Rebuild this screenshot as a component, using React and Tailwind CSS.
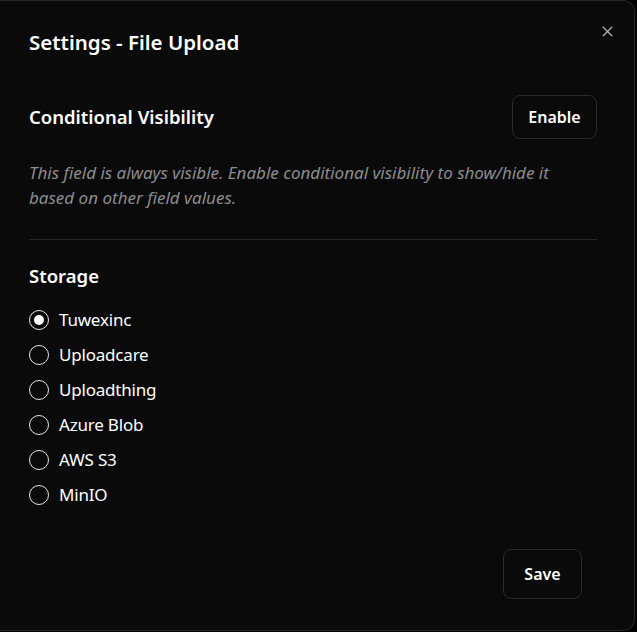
import { useState } from "react";

const options = ["Tuwexinc", "Uploadcare", "Uploadthing", "Azure Blob", "AWS S3", "MinIO"];

const App = () => {
  const [storage, setStorage] = useState("Tuwexinc");

  return (
    <div className="w-[637px] h-[632px] bg-black" style={{ fontFamily: '"Noto Sans", "Open Sans", sans-serif' }}>
      <div className="relative w-[635px] h-[631px] bg-[#0a0a0a] border-y border-r border-[#262626] rounded-r-xl pl-[29px] pr-[37px] pt-[26px] text-white">
        <button className="absolute right-[18px] top-[22px] text-[#b5b5b5]">
          <svg width="17" height="17" viewBox="0 0 24 24" fill="none" stroke="currentColor" strokeWidth="1.8" strokeLinecap="round">
            <path d="M18 6 6 18" />
            <path d="m6 6 12 12" />
          </svg>
        </button>

        <h1 className="text-[20.5px] leading-[30px] font-semibold">Settings - File Upload</h1>

        <div className="mt-[38px] flex items-center justify-between">
          <h2 className="text-[18.5px] font-semibold">Conditional Visibility</h2>
          <button className="h-[44px] w-[85px] rounded-lg border border-[#2a2a2a] bg-[#0a0a0a] text-[16px] font-semibold">
            Enable
          </button>
        </div>

        <p className="mt-[21px] text-[17px] leading-[25px] italic text-[#8c8c8c]">
          This field is always visible. Enable conditional visibility to show/hide it based on other field values.
        </p>

        <div className="mt-[29px] h-px bg-[#262626]" />

        <h2 className="mt-[22px] text-[18.5px] leading-[28px] font-semibold">Storage</h2>

        <div className="mt-[12px] flex flex-col">
          {options.map((o) => (
            <label key={o} className="flex items-center gap-[10px] h-[35px] cursor-pointer" onClick={() => setStorage(o)}>
              <span className="w-[20px] h-[20px] rounded-full border-[1.5px] border-[#e5e5e5] flex items-center justify-center">
                {storage === o && <span className="w-[10px] h-[10px] rounded-full bg-white" />}
              </span>
              <span className="text-[17px] tracking-[-0.2px]">{o}</span>
            </label>
          ))}
        </div>

        <div className="mt-[37px] flex justify-end pr-[15px]">
          <button className="h-[50px] w-[79px] rounded-lg border border-[#2a2a2a] bg-[#0a0a0a] text-[16px] font-semibold">
            Save
          </button>
        </div>
      </div>
    </div>
  );
};

export default App;
